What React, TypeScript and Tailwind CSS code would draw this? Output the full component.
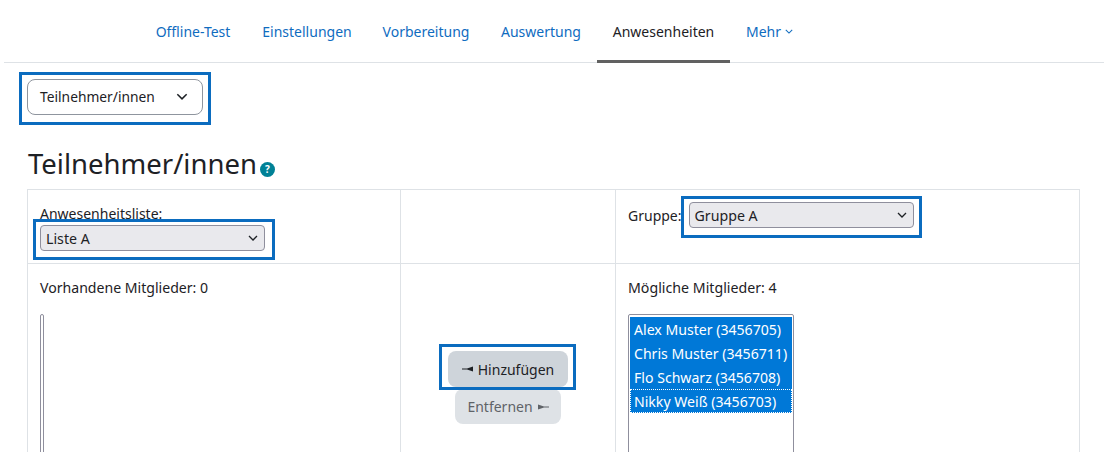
const font = "font-['Noto_Sans','Open_Sans',sans-serif]";

const tabs = [
  { label: "Offline-Test", width: "w-[108px]" },
  { label: "Einstellungen", width: "w-[120px]" },
  { label: "Vorbereitung", width: "w-[118px]" },
  { label: "Auswertung", width: "w-[112px]" },
];
const members = ["Alex Muster (3456705)", "Chris Muster (3456711)", "Flo Schwarz (3456708)"];

function Chevron({ className }: { className: string }) {
  return (
    <svg viewBox="0 0 10 6" fill="none" stroke="currentColor" strokeWidth="1.3" className={className}>
      <path d="M1 1l4 4 4-4" />
    </svg>
  );
}

function FakeSelect({ label }: { label: string }) {
  return (
    <div className="flex h-[26px] w-[225px] items-center justify-between rounded-[4px] border border-[#8f8f9d] bg-[#e9e9ed] pl-[5px] pr-[6px] text-[14.2px] text-[#1d2125]">
      <span className="pt-[1px]">{label}</span>
      <Chevron className="w-[10px] h-[6px]" />
    </div>
  );
}

export default function App() {
  return (
    <div className={`${font} h-[452px] w-[1104px] overflow-hidden bg-white text-[14px] text-[#1d2125]`}>
      {/* tabs */}
      <nav className="ml-[4px] flex h-[63px] border-b border-[#dee2e6] pl-[135px]">
        {tabs.map((t) => (
          <a key={t.label} className={`flex h-[62px] items-center justify-center text-[#0f6cbf] ${t.width}`}>
            {t.label}
          </a>
        ))}
        <a className="flex h-[63px] w-[133px] items-center justify-center border-b-[3px] border-[#616161] pt-[3px] text-[#1d2125]">
          Anwesenheiten
        </a>
        <a className="flex h-[62px] items-center gap-[4px] px-[16px] text-[#0f6cbf]">
          Mehr
          <Chevron className="w-[8px] h-[5px] mt-[1px]" />
        </a>
      </nav>

      <div className="pl-[19px] pt-[9px]">
        <div className="w-[192px] border-[3px] border-[#0b6cbf] px-[5px] pt-[4px] pb-[7px]">
          <div className="flex h-[36px] items-center justify-between rounded-[8px] border border-[#8f959e] bg-white pl-[12px] pr-[14px]">
            <span className="text-[13.8px]">Teilnehmer/innen</span>
            <Chevron className="w-[12px] h-[7px] -mt-[1px]" />
          </div>
        </div>
      </div>

      <div className="ml-[27px] w-[1053px]">
        <h2 className="mt-[17px] mb-[3px] flex h-[44px] items-center pl-[1px] text-[27.5px] leading-none">
          Teilnehmer/innen
          <span className="ml-[3px] mt-[10px] flex h-[15px] w-[15px] items-center justify-center rounded-full bg-[#008196] text-[10px] font-bold text-white">
            ?
          </span>
        </h2>

        <div className="grid grid-cols-[372px_215px_464px] border border-b-0 border-[#dee2e6]">
          {/* first row */}
          <div className="h-[73px] pl-[12px] pt-[14px]">
            <div className="text-[14px] leading-[20px]">Anwesenheitsliste:</div>
            <div className="relative -ml-[7px] -mt-[5px] w-[242px] border-[3px] border-[#0b6cbf] pl-[4px] pt-[3px] pb-[6px]">
              <FakeSelect label="Liste A" />
            </div>
          </div>
          <div className="border-l border-[#dee2e6]" />
          <div className="flex items-start border-l border-[#dee2e6] pl-[12px] pt-[6px]">
            <span className="mt-[10px] leading-[20px]">Gruppe:</span>
            <div className="-ml-[1px] w-[241px] border-[3px] border-[#0b6cbf] px-[5px] pt-[3px] pb-[7px]">
              <FakeSelect label="Gruppe A" />
            </div>
          </div>

          {/* second row */}
          <div className="h-[200px] border-t border-[#dee2e6] pl-[12px] pt-[14px]">
            <div className="text-[14.1px] leading-[20px]">Vorhandene Mitglieder: 0</div>
            <div className="mt-[16px] h-[200px] w-[4px] rounded-[2px] border border-[#8f8f9d]" />
          </div>
          <div className="flex flex-col items-center border-l border-t border-[#dee2e6] pt-[80px]">
            <div className="relative z-10 ml-[38px] w-[137px] self-start border-[3px] border-[#0b6cbf] pl-[6px] pr-[5px] pt-[4px]">
              <button className="flex h-[36px] w-[120px] items-center justify-center gap-[4px] rounded-[8px] bg-[#ced4da] text-[#1d2125]">
                <svg viewBox="0 0 12 6" className="h-[6px] w-[12px]" fill="currentColor">
                  <path d="M0 2.5h5L11 .5v5L5 3.5H0z" />
                </svg>
                Hinzufügen
              </button>
            </div>
            <button className="-mt-[1px] flex h-[35px] w-[106px] items-center justify-center gap-[4px] rounded-[8px] bg-[#dee2e6] text-[#5f6368]">
              Entfernen
              <svg viewBox="0 0 12 6" className="h-[6px] w-[12px]" fill="currentColor">
                <path d="M1 .5l6 2h5v1H7l-6 2z" />
              </svg>
            </button>
          </div>
          <div className="border-l border-t border-[#dee2e6] pl-[12px] pt-[14px]">
            <div className="text-[14.2px] leading-[20px]">Mögliche Mitglieder: 4</div>
            <div className="mt-[16px] h-[200px] w-[166px] rounded-[2px] border border-[#8f8f9d] px-[1px] pt-[2px] text-[14.1px] text-white">
              {members.map((m) => (
                <div key={m} className="h-[24px] overflow-hidden whitespace-nowrap bg-[#0078d7] pl-[4px] pt-[1px] leading-[24px]">
                  {m}
                </div>
              ))}
              <div className="h-[24px] whitespace-nowrap border border-dotted border-white bg-[#0078d7] pl-[3px] leading-[23px]">
                Nikky Weiß (3456703)
              </div>
            </div>
          </div>
        </div>
      </div>
    </div>
  );
}
